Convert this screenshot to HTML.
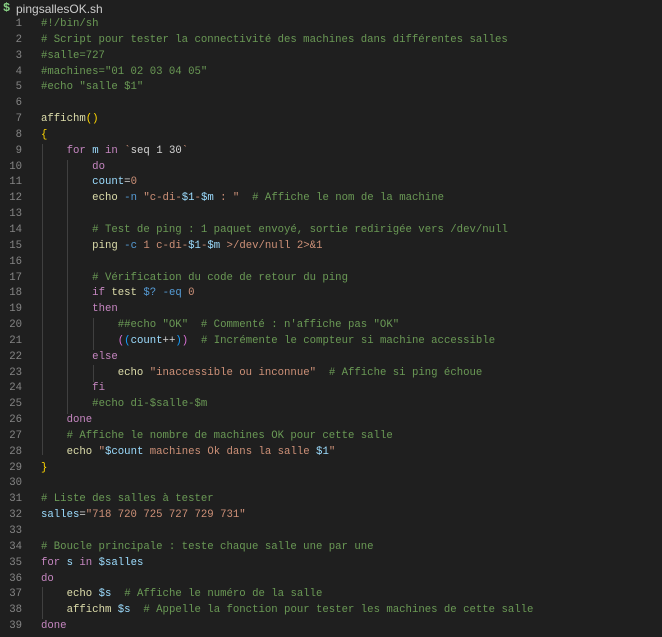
<!DOCTYPE html>
<html><head><meta charset="utf-8"><style>
html,body{margin:0;padding:0;background:#1f1f1f;width:662px;height:637px;overflow:hidden}
.t{position:absolute;left:0;top:0;height:17px;width:662px;font:12px "Liberation Sans",sans-serif;color:#cccccc}
.t .d{position:absolute;left:3px;top:1px;color:#89d185;font:bold 12px "Liberation Mono",monospace}
.t .n{position:absolute;left:16px;top:2px}
.ln{position:absolute;left:0;top:17px;width:22px;text-align:right;font:10.67px/15.84px "Liberation Mono",monospace;color:#858585;white-space:pre}
pre{position:absolute;left:41px;top:17px;margin:0;font:10.67px/15.84px "Liberation Mono",monospace;color:#d4d4d4}
.c{color:#6a9955}.k{color:#c586c0}.f{color:#dcdcaa}.s{color:#ce9178}.v{color:#9cdcfe}.b{color:#569cd6}.y{color:#ffd700}.p{color:#da70d6}.q{color:#179fff}
.g{position:absolute;width:1px;background:#404040}
</style></head><body>
<div class="t"><span class="d">$</span><span class="n">pingsallesOK.sh</span></div>
<div class="ln">1
2
3
4
5
6
7
8
9
10
11
12
13
14
15
16
17
18
19
20
21
22
23
24
25
26
27
28
29
30
31
32
33
34
35
36
37
38
39</div>
<div class="g" style="left:42px;top:144px;height:311px"></div>
<div class="g" style="left:67px;top:160px;height:254px"></div>
<div class="g" style="left:93px;top:318px;height:32px"></div>
<div class="g" style="left:93px;top:365px;height:17px"></div>
<div class="g" style="left:42px;top:587px;height:32px"></div>
<pre><span class="c">#!/bin/sh</span>
<span class="c"># Script pour tester la connectivité des machines dans différentes salles</span>
<span class="c">#salle=727</span>
<span class="c">#machines="01 02 03 04 05"</span>
<span class="c">#echo "salle $1"</span>

<span class="f">affichm</span><span class="y">()</span>
<span class="y">{</span>
    <span class="k">for</span> <span class="v">m</span> <span class="k">in</span> <span class="s">`</span>seq 1 30<span class="s">`</span>
        <span class="k">do</span>
        <span class="v">count</span>=<span class="s">0</span>
        <span class="f">echo</span> <span class="b">-n</span> <span class="s">"c-di-</span><span class="v">$1</span><span class="s">-</span><span class="v">$m</span><span class="s"> : "</span>  <span class="c"># Affiche le nom de la machine</span>

        <span class="c"># Test de ping : 1 paquet envoyé, sortie redirigée vers /dev/null</span>
        <span class="f">ping</span> <span class="b">-c</span> <span class="s">1 c-di-</span><span class="v">$1</span><span class="s">-</span><span class="v">$m</span> <span class="s">&gt;/dev/null 2&gt;&amp;1</span>

        <span class="c"># Vérification du code de retour du ping</span>
        <span class="k">if</span> <span class="f">test</span> <span class="b">$?</span> <span class="b">-eq</span> <span class="s">0</span>
        <span class="k">then</span>
            <span class="c">##echo "OK"  # Commenté : n'affiche pas "OK"</span>
            <span class="p">(</span><span class="q">(</span><span class="v">count</span>++<span class="q">)</span><span class="p">)</span>  <span class="c"># Incrémente le compteur si machine accessible</span>
        <span class="k">else</span>
            <span class="f">echo</span> <span class="s">"inaccessible ou inconnue"</span>  <span class="c"># Affiche si ping échoue</span>
        <span class="k">fi</span>
        <span class="c">#echo di-$salle-$m</span>
    <span class="k">done</span>
    <span class="c"># Affiche le nombre de machines OK pour cette salle</span>
    <span class="f">echo</span> <span class="s">"</span><span class="v">$count</span><span class="s"> machines Ok dans la salle </span><span class="v">$1</span><span class="s">"</span>
<span class="y">}</span>

<span class="c"># Liste des salles à tester</span>
<span class="v">salles</span>=<span class="s">"718 720 725 727 729 731"</span>

<span class="c"># Boucle principale : teste chaque salle une par une</span>
<span class="k">for</span> <span class="v">s</span> <span class="k">in</span> <span class="v">$salles</span>
<span class="k">do</span>
    <span class="f">echo</span> <span class="v">$s</span>  <span class="c"># Affiche le numéro de la salle</span>
    <span class="f">affichm</span> <span class="v">$s</span>  <span class="c"># Appelle la fonction pour tester les machines de cette salle</span>
<span class="k">done</span></pre>
</body></html>
